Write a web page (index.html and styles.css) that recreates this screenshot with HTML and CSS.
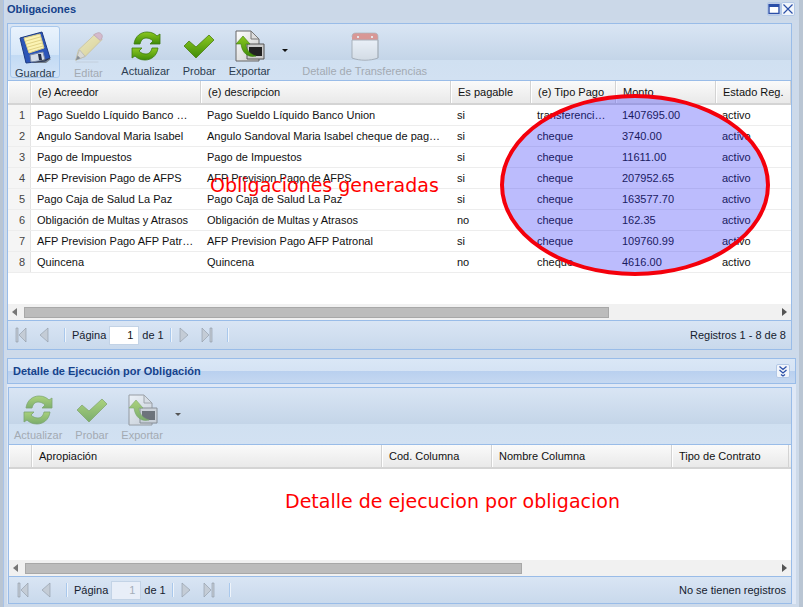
FILE: index.html
```html
<!DOCTYPE html>
<html lang="es">
<head>
<meta charset="utf-8">
<title>Obligaciones</title>
<link rel="stylesheet" href="styles.css">
</head>
<body>
<svg class="defs" width="0" height="0" aria-hidden="true">
  <defs>
    <linearGradient id="gr" x1="0" y1="0" x2="0" y2="1"><stop offset="0" stop-color="#8cc820"/><stop offset="1" stop-color="#3f8c08"/></linearGradient>
    <linearGradient id="ye" x1="0" y1="0" x2="1" y2="1"><stop offset="0" stop-color="#fdf3a4"/><stop offset="1" stop-color="#e9c94c"/></linearGradient>
    <linearGradient id="pg" x1="0" y1="0" x2="1" y2="1"><stop offset="0" stop-color="#fff"/><stop offset="1" stop-color="#c8c8c8"/></linearGradient>
    <linearGradient id="cal" x1="0" y1="0" x2="0" y2="1"><stop offset="0" stop-color="#fff"/><stop offset="1" stop-color="#dfe1e3"/></linearGradient>
    <symbol id="i-save" viewBox="0 0 34 34">
      <path d="M2 8 24 2l8 26-5 3-19 2z" fill="#2c55b8" stroke="#1d3a80"/>
      <path d="M6 8 22 4l4 14-15 5z" fill="#fbf3b4" stroke="#d9cd86"/>
      <path d="M8 11l14-4M9 14l14-4M10 17l14-4M11 20l14-4" stroke="#d8c878" stroke-width=".8"/>
      <path d="M13 32 12 25l13-3 2 8z" fill="#d5dde8" stroke="#7b8aa5"/>
      <path d="M20 24h3l1 6h-3z" fill="#26304a"/>
      <path d="M31 28l2 1-5 4H14z" fill="#333" opacity=".55"/>
    </symbol>
    <symbol id="i-edit" viewBox="0 0 34 34">
      <path d="M7 20 25 3l7 6-18 18-10 4z" fill="url(#ye)" stroke="#c9b467"/>
      <path d="M25 3c3-2 5-1 6 0s2 3 0 6l-1 1-7-6z" fill="#d79cb0" stroke="#b08090"/>
      <path d="M8 20l6 7-10 4z" fill="#e9dcc4" stroke="#b0a58e"/>
      <path d="M4 31l2-5 3 3z" fill="#555"/>
      <path d="M4 33h24" stroke="#999" stroke-width="1" opacity=".4"/>
    </symbol>
    <symbol id="i-refresh" viewBox="0 0 32 32">
      <path d="M4 14C5 6 11 2 17 2c5 0 8 2 10 4l3-2v10H20l3-3c-2-2-4-3-7-3-3 0-5 2-6 6z" fill="url(#gr)" stroke="#3c7a10" stroke-width=".8"/>
      <path d="M28 18c-1 8-7 12-13 12-5 0-8-2-10-4l-3 2V18h10l-3 3c2 2 4 3 7 3 3 0 5-2 6-6z" fill="url(#gr)" stroke="#3c7a10" stroke-width=".8"/>
    </symbol>
    <symbol id="i-check" viewBox="0 0 32 32">
      <path d="M1 16l5-5 7 6L26 5l5 5-18 18z" fill="url(#gr)" stroke="#4a7d10" stroke-width=".8"/>
    </symbol>
    <symbol id="i-export" viewBox="0 0 32 32">
      <path d="M3 1h15l8 8v22H3z" fill="url(#pg)" stroke="#666"/>
      <path d="M18 1v8h8z" fill="#ddd" stroke="#777"/>
      <path d="M14 14h17v15H14z" fill="#ccc" stroke="#555"/>
      <path d="M16 17h13v9H16z" fill="#222"/>
      <path d="M10 6l7 8h-4c0 6 4 10 10 12-8 2-14-3-15-12H3z" fill="url(#gr)" stroke="#3c7a10" stroke-width=".6"/>
    </symbol>
    <symbol id="i-cal" viewBox="0 0 32 32">
      <path d="M3 7c0-3 1-4 4-4h18c3 0 4 1 4 4v5H3z" fill="#de5d4e"/>
      <path d="M3 10h26v18c-8 3-18 3-26 0z" fill="url(#cal)" stroke="#8b8f94"/>
      <path d="M8 6h2v2H8zM22 6h2v2h-2z" fill="#f7e9e4"/>
      <path d="M3 7c0-3 1-4 4-4h18c3 0 4 1 4 4v21" fill="none" stroke="#8b8f94" stroke-width=".7"/>
    </symbol>
    <symbol id="p-first" viewBox="0 0 12 16"><path d="M1 1h2v14H1z" fill="#c4ccd6" stroke="#8f98a4" stroke-width=".6"/><path d="M11 1v14L4 8z" fill="#c4ccd6" stroke="#8f98a4" stroke-width=".6"/></symbol>
    <symbol id="p-prev" viewBox="0 0 12 16"><path d="M10 1v14L2 8z" fill="#c4ccd6" stroke="#8f98a4" stroke-width=".6"/></symbol>
    <symbol id="p-next" viewBox="0 0 12 16"><path d="M2 1v14l8-7z" fill="#c4ccd6" stroke="#8f98a4" stroke-width=".6"/></symbol>
    <symbol id="p-last" viewBox="0 0 12 16"><path d="M1 1v14l7-7z" fill="#c4ccd6" stroke="#8f98a4" stroke-width=".6"/><path d="M9 1h2v14H9z" fill="#c4ccd6" stroke="#8f98a4" stroke-width=".6"/></symbol>
  </defs>
</svg>

<div class="window">
  <header class="win-head">
    <span class="win-title">Obligaciones</span>
    <span class="win-tools">
      <span class="tool"><svg width="12" height="12" viewBox="0 0 12 12"><path d="M1 1.5h10v9H1z" fill="#fff" stroke="#2b4fa8" stroke-width="1.4"/><path d="M1 3h10" stroke="#2b4fa8" stroke-width="2"/></svg></span>
      <span class="tool"><svg width="12" height="12" viewBox="0 0 12 12"><path d="M1.5 1.5l9 9M10.5 1.5l-9 9" stroke="#2b4fa8" stroke-width="1.2"/></svg></span>
    </span>
  </header>

  <section class="panel panel-top">
    <div class="toolbar">
      <button class="tb active"><svg width="34" height="34"><use href="#i-save"/></svg><span>Guardar</span></button>
      <button class="tb off w-edit"><svg class="img" width="32" height="34"><use href="#i-edit"/></svg><span>Editar</span></button>
      <button class="tb"><svg width="32" height="32"><use href="#i-refresh"/></svg><span>Actualizar</span></button>
      <button class="tb"><svg width="32" height="32"><use href="#i-check"/></svg><span>Probar</span></button>
      <button class="tb"><svg width="32" height="32"><use href="#i-export"/></svg><span>Exportar</span></button>
      <i class="caret"></i>
      <button class="tb off w-det"><svg class="img" width="32" height="32"><use href="#i-cal"/></svg><span>Detalle de Transferencias</span></button>
    </div>

    <div class="grid cols-a">
      <div class="row head">
        <div class="c num"></div><div class="c">(e) Acreedor</div><div class="c">(e) descripcion</div><div class="c">Es pagable</div><div class="c">(e) Tipo Pago</div><div class="c">Monto</div><div class="c">Estado Reg.</div>
      </div>
      <div class="row"><div class="c num">1</div><div class="c">Pago Sueldo Líquido Banco Union</div><div class="c">Pago Sueldo Líquido Banco Union</div><div class="c">si</div><div class="c">transferencia bancaria</div><div class="c">1407695.00</div><div class="c">activo</div></div>
      <div class="row"><div class="c num">2</div><div class="c">Angulo Sandoval Maria Isabel</div><div class="c">Angulo Sandoval Maria Isabel cheque de pago de sueldo</div><div class="c">si</div><div class="c">cheque</div><div class="c">3740.00</div><div class="c">activo</div></div>
      <div class="row"><div class="c num">3</div><div class="c">Pago de Impuestos</div><div class="c">Pago de Impuestos</div><div class="c">si</div><div class="c">cheque</div><div class="c">11611.00</div><div class="c">activo</div></div>
      <div class="row"><div class="c num">4</div><div class="c">AFP Prevision Pago de AFPS</div><div class="c">AFP Prevision Pago de AFPS</div><div class="c">si</div><div class="c">cheque</div><div class="c">207952.65</div><div class="c">activo</div></div>
      <div class="row"><div class="c num">5</div><div class="c">Pago Caja de Salud La Paz</div><div class="c">Pago Caja de Salud La Paz</div><div class="c">si</div><div class="c">cheque</div><div class="c">163577.70</div><div class="c">activo</div></div>
      <div class="row"><div class="c num">6</div><div class="c">Obligación de Multas y Atrasos</div><div class="c">Obligación de Multas y Atrasos</div><div class="c">no</div><div class="c">cheque</div><div class="c">162.35</div><div class="c">activo</div></div>
      <div class="row"><div class="c num">7</div><div class="c">AFP Prevision Pago AFP Patronal</div><div class="c">AFP Prevision Pago AFP Patronal</div><div class="c">si</div><div class="c">cheque</div><div class="c">109760.99</div><div class="c">activo</div></div>
      <div class="row"><div class="c num">8</div><div class="c">Quincena</div><div class="c">Quincena</div><div class="c">no</div><div class="c">cheque</div><div class="c">4616.00</div><div class="c">activo</div></div>
      <div class="grid-fill h-a"></div>
      <div class="hscroll"><i class="arr l"></i><div class="thumb t-a"></div><i class="arr r"></i></div>
    </div>

    <div class="pager">
      <svg width="12" height="16"><use href="#p-first"/></svg>
      <svg width="12" height="16"><use href="#p-prev"/></svg>
      <i class="sep"></i>
      <span>Página</span><span class="pinput">1</span><span>de 1</span>
      <i class="sep"></i>
      <svg width="12" height="16"><use href="#p-next"/></svg>
      <svg width="12" height="16"><use href="#p-last"/></svg>
      <i class="sep"></i>
      <span class="pinfo">Registros 1 - 8 de 8</span>
    </div>
  </section>

  <section class="panel-bottom">
    <header class="sub-head">
      <span class="sub-title">Detalle de Ejecución por Obligación</span>
      <span class="tool tool-sub"><svg width="12" height="12" viewBox="0 0 12 12"><path d="M2.5 1.5 6 4.5l3.500-3M2.500 5 6 8l3.500-3M4 9.500 6 11l2-1.500" fill="none" stroke="#2b4fa8" stroke-width="1.300"/></svg></span>
    </header>
    <div class="panel panel-sub">
      <div class="toolbar">
        <button class="tb off"><svg class="img" width="32" height="32"><use href="#i-refresh"/></svg><span>Actualizar</span></button>
        <button class="tb off"><svg class="img" width="32" height="32"><use href="#i-check"/></svg><span>Probar</span></button>
        <button class="tb off"><svg class="img" width="32" height="32"><use href="#i-export"/></svg><span>Exportar</span></button>
        <i class="caret dim"></i>
      </div>
      <div class="grid cols-b">
        <div class="row head">
          <div class="c num"></div><div class="c">Apropiación</div><div class="c">Cod. Columna</div><div class="c">Nombre Columna</div><div class="c">Tipo de Contrato</div>
        </div>
        <div class="grid-fill h-b"></div>
        <div class="hscroll"><i class="arr l"></i><div class="thumb t-b"></div><i class="arr r"></i></div>
      </div>
      <div class="pager pager-b">
        <svg width="12" height="16"><use href="#p-first"/></svg>
        <svg width="12" height="16"><use href="#p-prev"/></svg>
        <i class="sep"></i>
        <span>Página</span><span class="pinput dis">1</span><span>de 1</span>
        <i class="sep"></i>
        <svg width="12" height="16"><use href="#p-next"/></svg>
        <svg width="12" height="16"><use href="#p-last"/></svg>
        <i class="sep"></i>
        <span class="pinfo">No se tienen registros</span>
      </div>
    </div>
  </section>

  <div class="ellipse"></div>
  <div class="note note-a">Obligaciones generadas</div>
  <div class="note note-b">Detalle de ejecucion por obligacion</div>
</div>
</body>
</html>
```
FILE: styles.css
```css
* { box-sizing: border-box; }
html, body { margin: 0; padding: 0; }
body {
  width: 803px;
  height: 607px;
  overflow: hidden;
  font-family: "Liberation Sans", Arial, sans-serif;
  font-size: 11px;
  color: #15212e;
  background: #b9c5d3;
}
.defs { position: absolute; }
.window {
  position: relative;
  width: 796px;
  height: 607px;
  margin-left: 3px;
  padding: 0 0 0 4px;
  background: #cddaea;
  border-left: 1px solid #a9c3e8;
}
.win-head {
  display: flex;
  align-items: center;
  justify-content: space-between;
  height: 20px;
  padding: 0 3px 3px 0;
  margin-left: -1px;
  background: #cbd8e8;
}
.win-title { font-weight: bold; color: #15428b; font-size: 11px; }
.win-tools { display: flex; gap: 0; margin-right: 1px; }
.tool {
  display: flex;
  align-items: center;
  justify-content: center;
  width: 14px;
  height: 14px;
  background: #f1f5fb;
  border: 1px solid #b3c8e6;
  border-radius: 2px;
}
.panel {
  width: 785px;
  border: 1px solid #99bce8;
  border-top-width: 1px;
}
.panel-top { height: 327px; margin-top: 3px; margin-left: -1px; background: #dfe8f6; display: flex; flex-direction: column; }
.toolbar {
  display: flex;
  align-items: flex-start;
  height: 57px;
  padding: 2px 2px 0;
  background: linear-gradient(#d9e5f4 0, #c4d5e8 64%, #d0e0f1 65%, #d2e1f2 100%);
  border-bottom: 1px solid #99bce8;
}
.tb {
  display: flex;
  flex-direction: column;
  align-items: center;
  height: 52px;
  padding: 3px 4px 0;
  margin: 0 3px 0 0;
  font: inherit;
  color: #2c3d50;
  background: none;
  border: 1px solid transparent;
  border-radius: 3px;
}
.tb svg { flex: none; }
.tb span { margin-top: 3px; line-height: 13px; white-space: nowrap; }
.tb.active {
  background: linear-gradient(#eaf3fd 0, #d5e6f8 55%, #c2daf4 56%, #d3e4f7 100%);
  border-color: #a9c8ec;
}
.tb.off { color: #a3aab2; }
.tb.off .img { opacity: .55; }
.w-edit { width: 50px; }
.w-det { margin-left: 2px; }
.caret {
  flex: none;
  width: 0;
  height: 0;
  margin: 23px 7px 0 4px;
  border: 3px solid transparent;
  border-top: 3px solid #111;
  border-bottom: 0;
}
.caret.dim { border-top-color: #555; }

.grid { background: #fff; display: flex; flex-direction: column; }
.row {
  display: grid;
  height: 21px;
  border-bottom: 1px solid #ededed;
  align-items: center;
  color: #111;
}
.cols-a .row { grid-template-columns: 23px 170px 250px 80px 85px 100px 75px; }
.cols-b .row { grid-template-columns: 23px 350px 110px 180px 117px; }
.c { padding: 0 6px; white-space: nowrap; overflow: hidden; text-overflow: ellipsis; }
.c.num { padding: 0 5px 0 0; height: 100%; text-align: right; line-height: 20px; color: #444; background: #f5f5f5; border-right: 1px solid #e4e4e4; }
.row.head {
  height: 24px;
  background: linear-gradient(#fafafa, #e9e9e9);
  border-bottom: 2px solid #d4d4d4;
}
.row.head .c { height: 100%; line-height: 22px; border-left: 1px solid #fff; border-right: 1px solid #d3d3d3; }
.row.head .c.num { background: none; }
.h-a { height: 31px; }
.h-b { height: 91px; }
.hscroll {
  display: flex;
  align-items: center;
  height: 16px;
  padding: 0 4px;
  background: #f1f1f1;
}
.thumb { height: 11px; background: #bcbcbc; border: 1px solid #a8a8a8; }
.t-a { width: 585px; margin-left: 7px; }
.t-b { width: 497px; margin-left: 7px; }
.arr { width: 0; height: 0; border: 4px solid transparent; }
.arr.l { border-right: 5px solid #777; border-left: 0; }
.arr.r { border-left: 5px solid #555; border-right: 0; margin-left: auto; }

.pager {
  display: flex;
  align-items: center;
  flex: 1;
  height: 27px;
  padding: 0 5px 0 7px;
  gap: 3px;
  background: linear-gradient(#d9e5f4, #c9d9ec);
  color: #15212e;
  border-top: 1px solid #99bce8;
}
.pager svg { margin-right: 8px; margin-left: 0; }
.sep { width: 2px; height: 14px; margin: 0 3px; background: #eef4fb; border-left: 1px solid #a9c8ec; }
.pinput {
  width: 30px;
  height: 19px;
  margin: 0;
  padding: 0 5px;
  line-height: 17px;
  text-align: right;
  color: #111;
  background: #fff;
  border: 1px solid #c3d3e6;
}
.pinput.dis { color: #a4adb8; background: #e8eef8; }
.pinfo { margin-left: auto; }

.panel-bottom { width: 789px; margin: 8px 0 0 -1px; background: #dfe8f6; }
.sub-head {
  display: flex;
  align-items: center;
  justify-content: space-between;
  height: 26px;
  padding: 0 5px;
  background: linear-gradient(#dae7f6 0, #d5e3f4 50%, #b9d0ef 51%, #c5d8f1 100%);
  border: 1px solid #99bce8;
  border-bottom-color: #99bce8;
}
.sub-title { font-weight: bold; color: #15428b; }
.tool-sub { width: 14px; height: 14px; margin-right: 0; }
.panel-sub { width: 784px; margin: 3px 0 0 1px; border-top: 1px solid #99bce8; }
.panel-sub .toolbar { height: 57px; padding-left: 0; }
.pager-b { padding-left: 8px; flex: none; height: 27px; }

.ellipse {
  position: absolute;
  left: -2px;
  top: 94px;
  margin-left: 498px;
  width: 270px;
  height: 182px;
  border: 4px solid #f4000c;
  border-radius: 50%;
  background: rgba(48, 48, 250, .32);
}
.note {
  position: absolute;
  color: #f00;
  font-family: "DejaVu Sans", sans-serif;
  white-space: nowrap;
}
.note-a { left: 206px; top: 172px; font-size: 19px; line-height: 26px; }
.note-b { left: 281px; top: 488px; font-size: 19px; line-height: 26px; }
```
